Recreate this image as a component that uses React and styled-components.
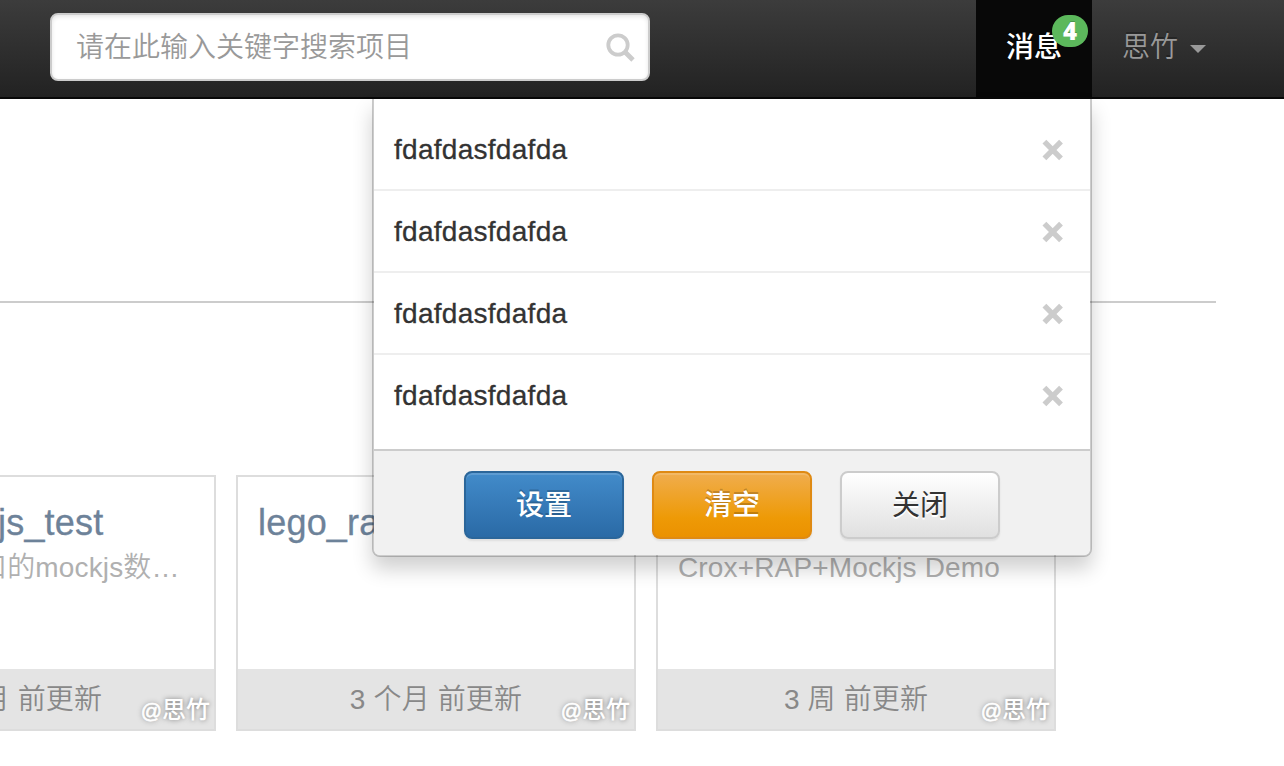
import React from "react";
import styled, { createGlobalStyle, css } from "styled-components";

const GlobalStyle = createGlobalStyle`
  * { box-sizing: border-box; }
  body {
    margin: 0;
    overflow: hidden;
    background: #fff;
    color: #333;
    font-family: "Liberation Sans", "Noto Sans CJK SC", sans-serif;
    font-size: 28px;
    line-height: 40px;
  }
`;

const Page = styled.div`
  position: relative;
  width: 1284px;
  height: 766px;
  overflow: hidden;
`;

const Navbar = styled.header`
  position: relative;
  display: flex;
  align-items: flex-start;
  height: 99px;
  padding-left: 50px;
  background: linear-gradient(to bottom, #3c3c3c 0%, #222 100%);
  border-bottom: 2px solid #080808;
`;

const SearchBox = styled.label`
  display: flex;
  align-items: center;
  justify-content: space-between;
  width: 600px;
  height: 68px;
  margin-top: 13px;
  padding: 2px 12px 0 24px;
  background: #fff;
  border: 2px solid #ccc;
  border-radius: 8px;
  box-shadow: inset 0 2px 4px rgba(0, 0, 0, 0.1);
`;

const SearchInput = styled.input`
  flex: 1;
  min-width: 0;
  height: 60px;
  padding: 0;
  border: 0;
  outline: 0;
  background: none;
  font: 350 28px/60px "Liberation Sans", "Noto Sans CJK SC", sans-serif;
  &::placeholder { color: #999; opacity: 1; }
`;

const Nav = styled.nav`
  display: flex;
  margin-left: 326px;
`;

const NavItem = styled.a`
  position: relative;
  display: flex;
  align-items: center;
  height: 97px;
  padding: 0 30px 1px;
  font-weight: ${(p) => (p.$active ? 500 : 350)};
  color: ${(p) => (p.$active ? "#fff" : "#999")};
  background: ${(p) => (p.$active ? "#080808" : "transparent")};
  text-shadow: 0 -2px 0 rgba(0, 0, 0, 0.25);
`;

const Badge = styled.span`
  position: absolute;
  top: 15px;
  right: 4px;
  width: 36px;
  height: 32px;
  border-radius: 16px;
  background: #5cb85c;
  color: #fff;
  font: 800 24px/31px "Open Sans", sans-serif;
  text-shadow: 0 -1px 0 rgba(0, 0, 0, 0.2);
  text-align: center;
`;

const Caret = styled.span`
  margin: 1px 0 0 12px;
  border-top: 8px solid #999;
  border-left: 8px solid transparent;
  border-right: 8px solid transparent;
`;

const Main = styled.main`
  display: flex;
  flex-direction: column;
  padding-top: 202px;
`;

const Divider = styled.div`
  width: 1216px;
  height: 2px;
  background: #ccc;
`;

const Cards = styled.div`
  display: flex;
  gap: 20px;
  margin: 172px 0 0 -184px;
`;

const Card = styled.article`
  display: flex;
  flex-direction: column;
  flex: none;
  width: 400px;
  height: 256px;
  border: 2px solid #ddd;
`;

const CardBody = styled.div`
  flex: 1;
  padding: 26px 0 0 20px;
  white-space: nowrap;
`;

const CardTitle = styled.div`
  height: 40px;
  padding-left: ${(p) => p.$indent || 0}px;
  color: #6d8299;
  font-size: 36px;
  letter-spacing: 0.2px;
  -webkit-text-stroke: 0.3px;
`;

const CardText = styled.div`
  margin-top: 5px;
  padding-left: ${(p) => p.$indent || 0}px;
  color: #b0b0b0;
  font-weight: 350;
  letter-spacing: 0.15px;
`;

const CardFooter = styled.footer`
  position: relative;
  height: 60px;
  background: #e4e4e4;
  color: #888;
  font-weight: 350;
  line-height: 62px;
  letter-spacing: 0.15px;
  text-align: center;
`;

const Owner = styled.span`
  position: absolute;
  right: 4px;
  bottom: 0;
  color: #fff;
  font-size: 24px;
  font-weight: 500;
  line-height: 36px;
  letter-spacing: 0;
  text-shadow: 0 0 5px #777;
`;

const At = styled.span`
  font-size: 21px;
  -webkit-text-stroke: 0.6px #fff;
`;

const Dropdown = styled.section`
  position: absolute;
  top: 99px;
  left: 372px;
  width: 720px;
  height: 458px;
  background: #fff;
  background-clip: padding-box;
  border: 2px solid rgba(0, 0, 0, 0.2);
  border-top: 0;
  border-radius: 0 0 8px 8px;
  box-shadow: 0 12px 20px rgba(0, 0, 0, 0.19);
`;

const MessageList = styled.div`
  height: 350px;
  padding-top: 10px;
`;

const Message = styled.div`
  display: flex;
  align-items: center;
  justify-content: space-between;
  height: 82px;
  padding: 2px 26px 0 20px;
  letter-spacing: 0.28px;
  -webkit-text-stroke: 0.3px;
  border-bottom: 2px solid #eee;
  &:last-child { border-bottom-color: transparent; }
`;

const Actions = styled.div`
  display: flex;
  justify-content: center;
  gap: 28px;
  height: 106px;
  padding-top: 20px;
  background: #f1f1f1;
  border-top: 2px solid #ccc;
  border-radius: 0 0 6px 6px;
`;

const tones = {
  primary: css`
    color: #fff;
    border-color: #2b669a;
    background: linear-gradient(to bottom, #428bca, #2a6aa6);
  `,
  warning: css`
    color: #fff;
    border-color: #df8a13;
    background: linear-gradient(to bottom, #f0ad4e, #ee9a06 70%, #eb9100);
  `,
  plain: css`
    color: #333;
    border-color: #ccc;
    background: linear-gradient(to bottom, #fff, #e0e0e0);
  `,
};

const Button = styled.button`
  width: 160px;
  height: 68px;
  padding: 2px 0 0;
  border: 2px solid;
  border-radius: 8px;
  font: ${(p) => (p.$tone === "plain" ? 400 : 500)} 28px/40px "Liberation Sans", "Noto Sans CJK SC", sans-serif;
  text-shadow: ${(p) => (p.$tone === "plain" ? "0 2px 0 #fff" : "0 -2px 0 rgba(0, 0, 0, 0.2)")};
  box-shadow: inset 0 2px 0 rgba(255, 255, 255, 0.15), 0 2px 2px rgba(0, 0, 0, 0.075);
  ${(p) => tones[p.$tone]}
`;

const SearchIcon = () => (
  <svg width="30" height="30" viewBox="0 0 30 30" fill="none" stroke="#ccc">
    <circle cx="12" cy="12" r="9.7" strokeWidth="3.8" />
    <path d="M18.5 18.5L27 27" strokeWidth="4.8" />
  </svg>
);

const RemoveIcon = () => (
  <svg width="22" height="22" viewBox="0 0 22 22" fill="none" stroke="#ccc" strokeWidth="5.4">
    <path d="M2.4 2.7L19 19.3M19 2.7L2.4 19.3" />
  </svg>
);

const projects = [
  { title: "js_test", titleIndent: 160, text: "口的mockjs数…", textIndent: 141, age: "3 个月 前更新" },
  { title: "lego_ra", text: "", age: "3 个月 前更新" },
  { title: "", text: "Crox+RAP+Mockjs Demo", age: "3 周 前更新" },
];

const messages = ["fdafdasfdafda", "fdafdasfdafda", "fdafdasfdafda", "fdafdasfdafda"];

export default function App() {
  return (
    <Page>
      <GlobalStyle />
      <Navbar>
        <SearchBox>
          <SearchInput placeholder="请在此输入关键字搜索项目" />
          <SearchIcon />
        </SearchBox>
        <Nav>
          <NavItem $active>
            消息
            <Badge>4</Badge>
          </NavItem>
          <NavItem>
            思竹
            <Caret />
          </NavItem>
        </Nav>
      </Navbar>
      <Main>
        <Divider />
        <Cards>
          {projects.map((p, i) => (
            <Card key={i}>
              <CardBody>
                <CardTitle $indent={p.titleIndent}>{p.title}</CardTitle>
                <CardText $indent={p.textIndent}>{p.text}</CardText>
              </CardBody>
              <CardFooter>
                {p.age}
                <Owner>
                  <At>@</At>思竹
                </Owner>
              </CardFooter>
            </Card>
          ))}
        </Cards>
      </Main>
      <Dropdown>
        <MessageList>
          {messages.map((m, i) => (
            <Message key={i}>
              {m}
              <RemoveIcon />
            </Message>
          ))}
        </MessageList>
        <Actions>
          <Button $tone="primary">设置</Button>
          <Button $tone="warning">清空</Button>
          <Button $tone="plain">关闭</Button>
        </Actions>
      </Dropdown>
    </Page>
  );
}
